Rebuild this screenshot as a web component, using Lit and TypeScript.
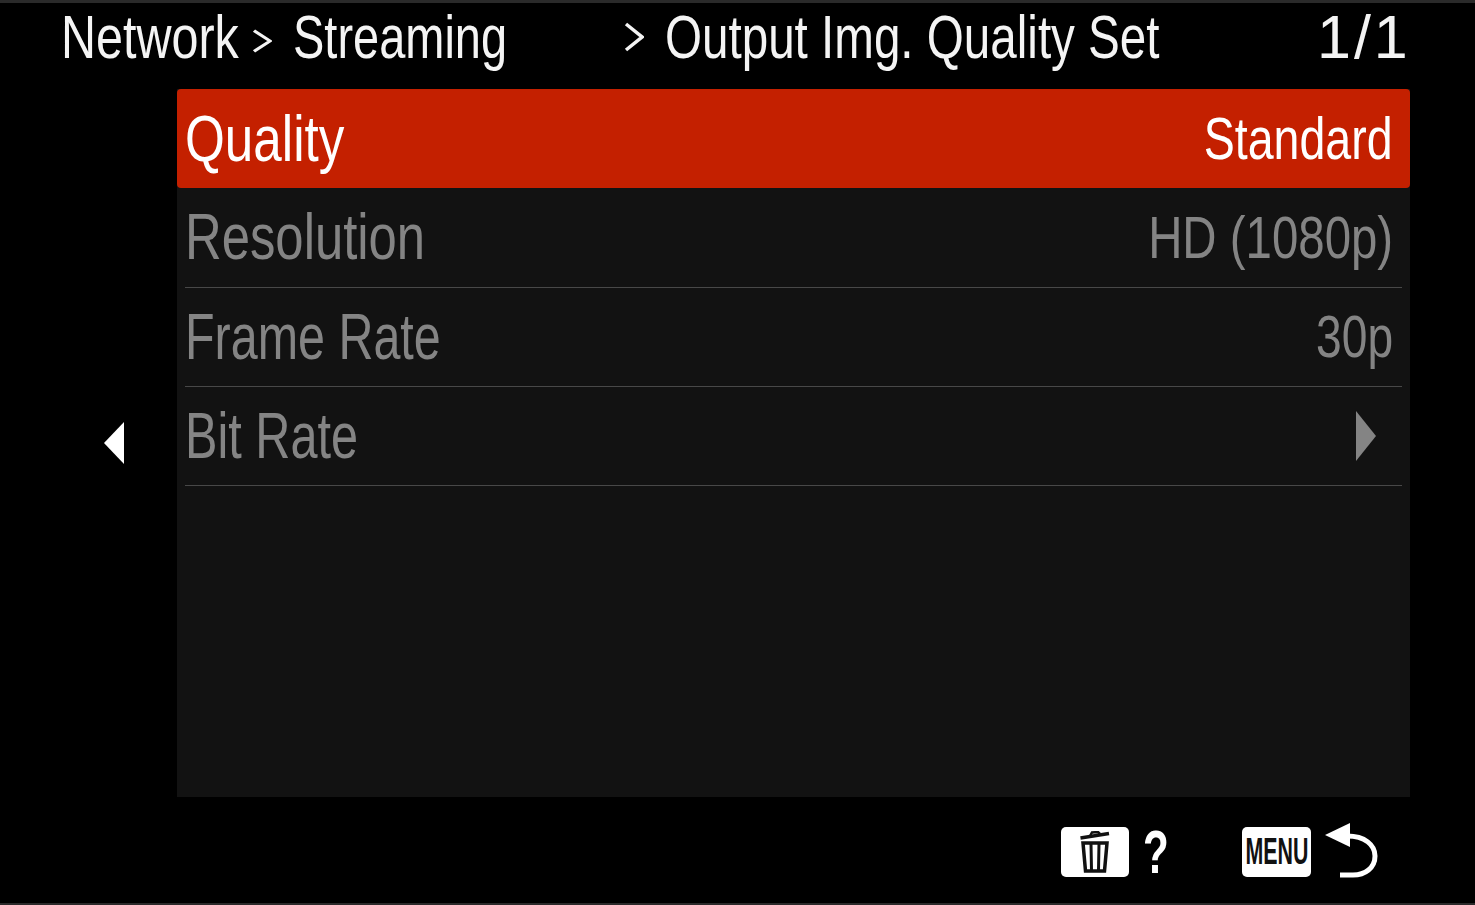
import { LitElement, html, css } from 'lit';
import { customElement } from 'lit/decorators.js';

const rows = [
  { label: 'Quality', labelScale: 0.8, value: 'Standard', valueScale: 0.775, selected: true },
  { label: 'Resolution', labelScale: 0.794, value: 'HD (1080p)', valueScale: 0.79 },
  { label: 'Frame Rate', labelScale: 0.757, value: '30p', valueScale: 0.77 },
  { label: 'Bit Rate', labelScale: 0.76, arrow: true },
];

@customElement('app-root')
export class AppRoot extends LitElement {
  static styles = css`
    :host {
      display: block;
      width: 1475px;
      height: 905px;
      background: #000;
      font-family: 'Liberation Sans', sans-serif;
      overflow: hidden;
    }

    .screen {
      height: 905px;
      display: grid;
      grid-template-rows: 86px 708px 1fr;
      border-top: 3px solid #2a2a2a;
      border-bottom: 2px solid #2a2a2a;
      box-sizing: border-box;
    }

    .header {
      display: grid;
      grid-template-columns: 61px 191px 41px 331px 41px 652px 1fr;
      align-items: start;
      color: #f4f4f4;
      font-size: 61px;
      line-height: 69px;
      white-space: nowrap;
    }

    .crumb {
      transform: scaleX(0.78);
      transform-origin: left;
    }

    .crumb.wide {
      transform: scaleX(0.795);
    }

    .crumb.tight {
      transform: scaleX(0.77);
    }

    .crumb-sep {
      height: 68px;
      display: flex;
      align-items: center;
    }

    .crumb-sep.low {
      padding-top: 8px;
      box-sizing: border-box;
    }

    .page {
      letter-spacing: 3px;
    }

    .body {
      display: grid;
      grid-template-columns: 177px 1233px;
    }

    .back {
      display: flex;
      align-items: center;
      padding-left: 104px;
    }

    .panel {
      background: #121212;
    }

    .row {
      height: 99.3px;
      box-sizing: border-box;
      margin: 0 8px;
      display: flex;
      align-items: center;
      justify-content: space-between;
      padding: 0 9px 0 0;
      color: #848484;
      border-bottom: 1.5px solid #484848;
      white-space: nowrap;
    }

    .row.selected {
      margin: 0;
      padding: 0 17px 0 8px;
      background: #c42000;
      color: #fff;
      border-bottom: none;
      border-radius: 4px;
    }

    .label {
      font-size: 64px;
      transform-origin: left;
    }

    .value {
      font-size: 60px;
      transform-origin: right;
    }

    .row svg {
      margin-right: 17px;
    }

    .footer {
      display: flex;
      align-items: center;
      padding: 3px 0 0 1061px;
    }

    .key {
      width: 68px;
      height: 50px;
      background: #fff;
      border-radius: 5px;
      display: flex;
      align-items: center;
      justify-content: center;
      color: #111;
    }

    .menu-key {
      width: 69px;
      margin-left: 70px;
      font-size: 36px;
      font-weight: bold;
    }

    .menu-key span {
      transform: scaleX(0.594);
    }

    .help {
      color: #fff;
      font-size: 62px;
      font-weight: bold;
      margin-left: 14px;
      width: 29px;
      transform: scaleX(0.68);
      transform-origin: left;
    }

    .return {
      margin-left: 14px;
    }
  `;

  render() {
    return html`
      <div class="screen">
        <div class="header">
          <span></span>
          <span class="crumb wide">Network</span>
          <span class="crumb-sep low">${this.chevron(24)}</span>
          <span class="crumb tight">Streaming</span>
          <span class="crumb-sep">${this.chevron(30)}</span>
          <span class="crumb">Output Img. Quality Set</span>
          <span class="page">1/1</span>
        </div>
        <div class="body">
          <div class="back">
            <svg width="20" height="42" viewBox="0 0 20 42">
              <path d="M20 0V42L0 21Z" fill="#fff" />
            </svg>
          </div>
          <div class="panel">
            ${rows.map(r => html`
              <div class="row ${r.selected ? 'selected' : ''}">
                <span class="label" style="transform: scaleX(${r.labelScale})">${r.label}</span>
                ${r.arrow
                  ? html`<svg width="20" height="50" viewBox="0 0 20 50"><path d="M0 0V50L20 25Z" fill="#848484" /></svg>`
                  : html`<span class="value" style="transform: scaleX(${r.valueScale})">${r.value}</span>`}
              </div>
            `)}
          </div>
        </div>
        <div class="footer">
          <div class="key">
            <svg width="30" height="42" viewBox="0 0 30 42" fill="none" stroke="#111">
              <path d="M0.5 7L29 2.5" stroke-width="3.5" />
              <path d="M10 5L12 1.5L18 1L20 3" stroke-width="2.5" />
              <path d="M3 12H27L24.5 40H5.5Z" stroke-width="3.5" />
              <path d="M11 13L11.5 39M19 13L18.5 39" stroke-width="3" />
            </svg>
          </div>
          <span class="help">?</span>
          <div class="key menu-key"><span>MENU</span></div>
          <svg class="return" width="54" height="58" viewBox="0 0 54 58" fill="none">
            <path d="M0 12L25 0V24Z" fill="#fff" />
            <path d="M22 13C40 13 50 22 50 33C50 45 40 52 28 52H15" stroke="#fff" stroke-width="5" />
          </svg>
        </div>
      </div>
    `;
  }

  chevron(height: number) {
    return html`<svg width="20" height="${height}" viewBox="0 0 20 30" preserveAspectRatio="none" fill="none">
      <path d="M2 2L18 15L2 28" stroke="#f4f4f4" stroke-width="3.5" />
    </svg>`;
  }
}
